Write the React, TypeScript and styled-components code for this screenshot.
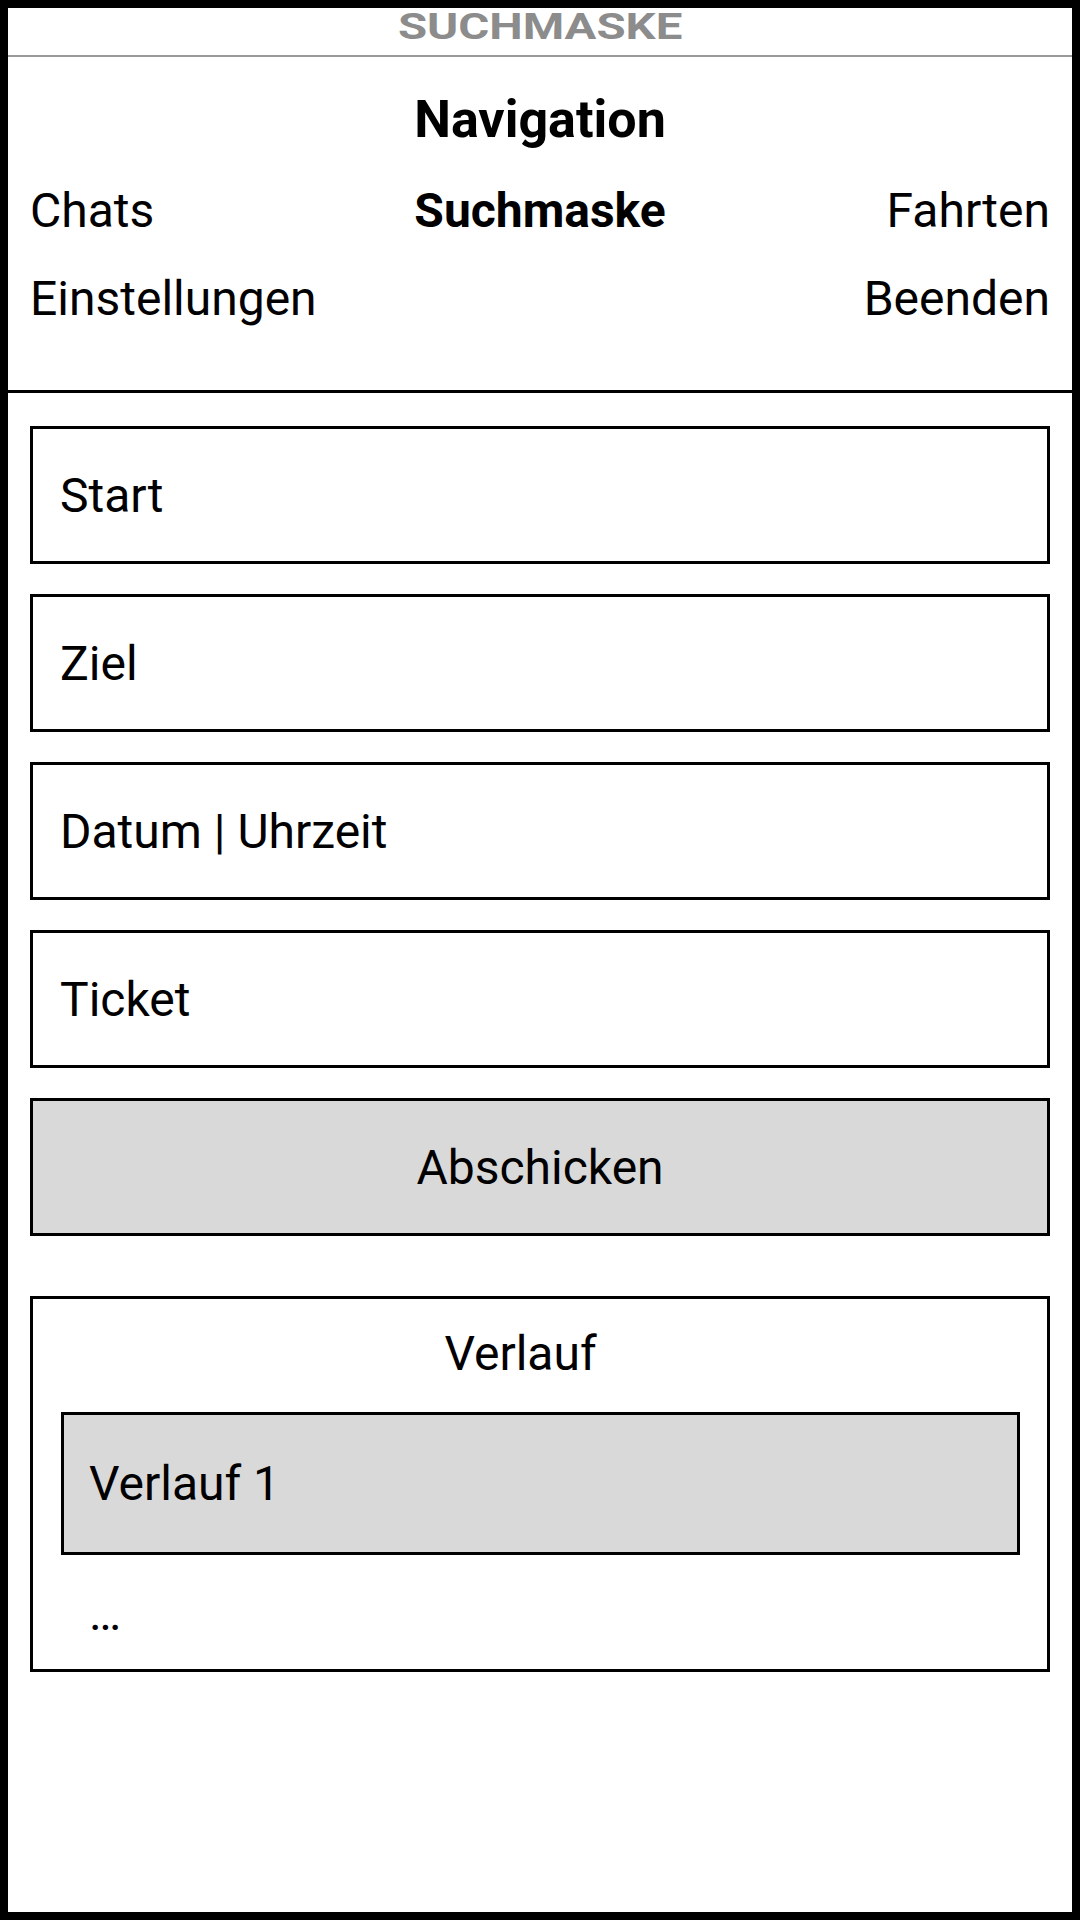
import React from 'react';
import styled, { createGlobalStyle } from 'styled-components';

const GlobalStyle = createGlobalStyle`
  html, body {
    margin: 0;
    padding: 0;
    background: #fff;
  }
  body {
    font-family: Roboto, "Liberation Sans", Arial, sans-serif;
    color: #000;
  }
`

const navLinks = [
  { label: 'Chats', align: 'start' },
  { label: 'Suchmaske', align: 'center', active: true },
  { label: 'Fahrten', align: 'end' },
  { label: 'Einstellungen', align: 'start' },
  { label: '', align: 'center' },
  { label: 'Beenden', align: 'end' },
]

const fields = ['Start', 'Ziel', 'Datum | Uhrzeit', 'Ticket']

const App = () => {
  return (
    <>
      <GlobalStyle />
      <Screen>
        <TitleBar>
          <Title>SUCHMASKE</Title>
        </TitleBar>
        <NavSection>
          <NavHeading>Navigation</NavHeading>
          <NavGrid>
            {navLinks.map((link, i) => (
              <NavLink key={i} $align={link.align} $active={link.active}>
                {link.label}
              </NavLink>
            ))}
          </NavGrid>
        </NavSection>
        <FormArea>
          {fields.map((f) => (
            <Field key={f}>{f}</Field>
          ))}
          <SubmitButton>Abschicken</SubmitButton>
          <HistoryBox>
            <HistoryTitle>Verlauf</HistoryTitle>
            <HistoryItem>Verlauf 1</HistoryItem>
            <HistoryMore>…</HistoryMore>
          </HistoryBox>
        </FormArea>
      </Screen>
    </>
  )
}

const Screen = styled.div`
  width: 1080px;
  height: 1920px;
  box-sizing: border-box;
  border: 8px solid #000;
  background: #fff;
  display: flex;
  flex-direction: column;
  overflow: hidden;
`

const TitleBar = styled.div`
  height: 47px;
  border-bottom: 2px solid #999;
  display: flex;
  justify-content: center;
  align-items: flex-start;
`

const Title = styled.span`
  display: inline-block;
  font-size: 37px;
  line-height: 37px;
  font-weight: 700;
  color: #8c8c8c;
  transform: scaleX(1.28);
`

const NavSection = styled.div`
  padding: 33px 22px 47px;
  border-bottom: 3px solid #000;
`

const NavHeading = styled.div`
  font-size: 52px;
  line-height: 60px;
  font-weight: 700;
  text-align: center;
  margin-bottom: 17px;
`

const NavGrid = styled.div`
  display: grid;
  grid-template-columns: 1fr auto 1fr;
  grid-auto-rows: 88px;
  font-size: 48px;
  line-height: 88px;
`

const NavLink = styled.div<{ $align: string; $active?: boolean }>`
  justify-self: ${(p) => p.$align};
  font-weight: ${(p) => (p.$active ? 700 : 400)};
`

const FormArea = styled.div`
  padding: 33px 22px 0;
  display: flex;
  flex-direction: column;
  gap: 30px;
`

const Field = styled.div`
  height: 138px;
  box-sizing: border-box;
  border: 3px solid #000;
  padding-left: 27px;
  display: flex;
  align-items: center;
  font-size: 48px;
`

const SubmitButton = styled(Field)`
  background: #d9d9d9;
  justify-content: center;
  padding-left: 0;
`

const HistoryBox = styled.div`
  margin-top: 30px;
  border: 3px solid #000;
  padding: 27px 27px 27px 28px;
  display: flex;
  flex-direction: column;
`

const HistoryTitle = styled.div`
  font-size: 48px;
  line-height: 56px;
  text-align: center;
  margin-right: 40px;
  margin-bottom: 30px;
`

const HistoryItem = styled.div`
  height: 143px;
  box-sizing: border-box;
  border: 3px solid #000;
  background: #d9d9d9;
  padding-left: 25px;
  display: flex;
  align-items: center;
  font-size: 48px;
`

const HistoryMore = styled.div`
  margin-top: 31px;
  padding-left: 28px;
  font-size: 48px;
  line-height: 56px;
`

export default App;
